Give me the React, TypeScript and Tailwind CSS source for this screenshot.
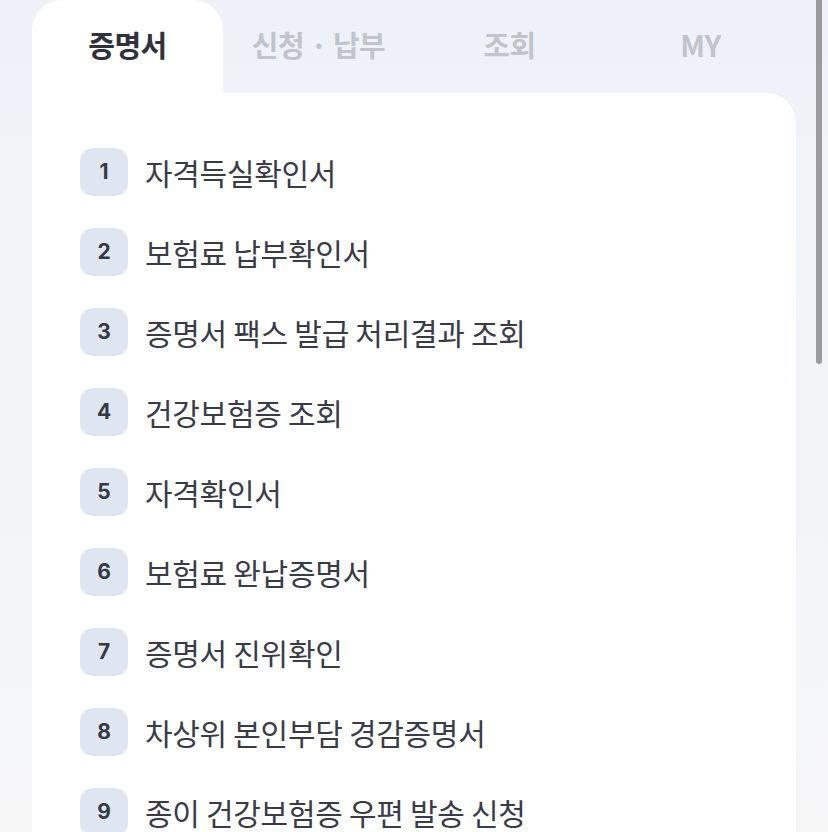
import React from 'react'

const TABS = ['증명서', '신청 · 납부', '조회', 'MY']

const ITEMS = [
  '자격득실확인서',
  '보험료 납부확인서',
  '증명서 팩스 발급 처리결과 조회',
  '건강보험증 조회',
  '자격확인서',
  '보험료 완납증명서',
  '증명서 진위확인',
  '차상위 본인부담 경감증명서',
  '종이 건강보험증 우편 발송 신청',
]

const font = 'font-["Noto_Sans_CJK_KR","Noto_Sans",sans-serif]'

const App: React.FC = () => {
  return (
    <div className={`h-[832px] overflow-hidden bg-gradient-to-b from-[#eef2f8] to-[#f6f6f7] ${font}`}>
      <div className="ml-[32px] w-[764px]">
        <div className="grid h-[93px] grid-cols-4">
          {TABS.map((tab, i) => (
            <button
              key={tab}
              className={
                i === 0
                  ? 'flex items-center justify-center rounded-t-[30px] bg-white pb-[4px] text-[29px] font-bold tracking-[-0.5px] text-[#30313c]'
                  : 'flex items-center justify-center pb-[4px] text-[29px] font-bold tracking-[-0.5px] text-[#c1c4ca]'
              }
            >
              {tab}
            </button>
          ))}
        </div>
        <div className="rounded-tr-[30px] bg-white pt-[55px] pl-[48px]">
          <ul className="flex flex-col gap-[32px]">
            {ITEMS.map((item, i) => (
              <li key={item} className="flex h-[48px] items-center gap-[17px]">
                <span className="flex h-[48px] w-[48px] shrink-0 items-center justify-center rounded-[13px] bg-[#dee6f2] font-['Inter',sans-serif] text-[21px] font-bold text-[#363845]">
                  {i + 1}
                </span>
                <span className="text-[30px] leading-none tracking-[-0.3px] text-[#3a3b48]">{item}</span>
              </li>
            ))}
          </ul>
        </div>
      </div>
      <div className="fixed top-0 right-[6px] h-[364px] w-[6px] rounded-b-full bg-[#9b9b9e]" />
    </div>
  )
}

export default App
